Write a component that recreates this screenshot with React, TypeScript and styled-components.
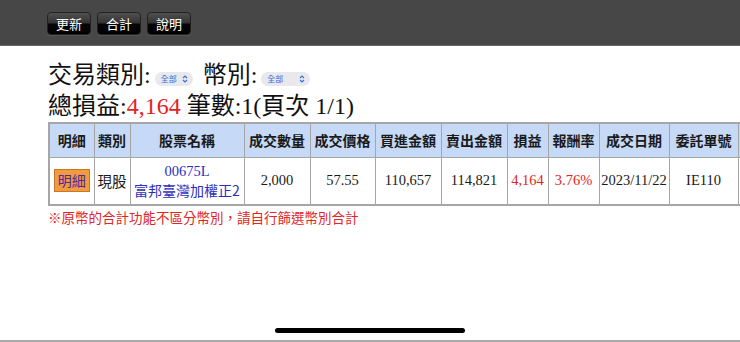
import React, { ReactElement } from 'react';
import styled, { createGlobalStyle } from 'styled-components';

const GlobalStyle = createGlobalStyle`
  html, body {
    margin: 0;
    padding: 0;
    background: #fff;
    overflow: hidden;
  }
  body {
    font-family: 'Liberation Serif', 'Noto Sans CJK TC', serif;
    color: #111;
  }
`;

const Page = styled.div`
  width: 740px;
  height: 342px;
  position: relative;
  overflow: hidden;
  border-bottom: 2px solid #a8a8a8;
  box-sizing: border-box;
`;

const TopBar = styled.div`
  height: 46px;
  background: #474747;
  border-bottom: 1px solid #6a6a6a;
  box-sizing: border-box;
  display: flex;
  align-items: flex-start;
  gap: 6px;
  padding: 12px 0 0 47px;
`;

const BarButton = styled.button`
  width: 44px;
  height: 23px;
  padding: 0;
  border: 1px solid #222;
  border-radius: 4px;
  background: linear-gradient(#505050 0%, #333 48%, #060606 52%, #000 100%);
  color: #fff;
  font-family: 'Noto Sans CJK TC', sans-serif;
  font-size: 13px;
  line-height: 21px;
  box-shadow: 0 1px 0 rgba(255, 255, 255, 0.08);
`;

const Content = styled.div`
  width: 900px;
  padding: 14px 0 0 48px;
`;

const Line = styled.div`
  font-size: 24px;
  line-height: 31px;
  display: flex;
  align-items: center;
  white-space: nowrap;
`;

const Gap = styled.span`
  display: inline-block;
  width: 10px;
`;

const Red = styled.span`
  color: #e22424;
`;

const Select = styled.span<{ $width: number }>`
  display: inline-flex;
  align-items: center;
  justify-content: space-between;
  width: ${({ $width }) => $width}px;
  height: 14px;
  margin: 6px 0 0 4px;
  padding: 0 5px 0 6px;
  box-sizing: border-box;
  border-radius: 7px;
  background: #e8e8ed;
  color: #2f6fe0;
  font-family: 'Noto Sans CJK TC', sans-serif;
  font-size: 8px;
  line-height: 14px;
`;

const Table = styled.table`
  border-collapse: collapse;
  table-layout: fixed;
  border: 2px solid #a6a6a6;
  white-space: nowrap;
`;

const Th = styled.th<{ $w: number }>`
  width: ${({ $w }) => $w}px;
  min-width: ${({ $w }) => $w}px;
  max-width: ${({ $w }) => $w}px;
  box-sizing: border-box;
  height: 34px;
  padding: 0;
  background: #c6d9f6;
  border: 1px solid #a6a6a6;
  font-family: 'Noto Sans CJK TC', sans-serif;
  font-size: 14px;
  font-weight: 700;
  color: #1a1a1a;
  text-align: center;
  overflow: hidden;
`;

const Td = styled.td<{ $red?: boolean; $sans?: boolean }>`
  height: 46px;
  padding: 0;
  border: 1px solid #a6a6a6;
  text-align: center;
  font-family: ${({ $sans }) =>
    $sans ? "'Noto Sans CJK TC', sans-serif" : "'Liberation Serif', 'Noto Sans CJK TC', serif"};
  font-size: 14.5px;
  color: ${({ $red }) => ($red ? '#e22424' : '#1a1a1a')};
`;

const DetailBadge = styled.span`
  display: inline-block;
  padding: 0 3px;
  background: #f29a3e;
  border: 1px solid #c9772a;
  color: #4a2aa0;
  font-family: 'Noto Sans CJK TC', sans-serif;
  font-size: 14px;
  line-height: 21px;
`;

const StockName = styled.div`
  color: #2b2fbf;
  line-height: 19px;
`;

const StockCode = styled.div`
  font-family: 'Liberation Serif', serif;
  font-size: 14.5px;
`;

const StockTitle = styled.div`
  font-family: 'Noto Sans CJK TC', sans-serif;
  font-size: 14px;
`;

const Note = styled.div`
  margin-top: 2px;
  color: #e22424;
  font-family: 'Noto Sans CJK TC', sans-serif;
  font-size: 13.5px;
  line-height: 18px;
`;

const HomeIndicator = styled.div`
  position: absolute;
  left: 275px;
  bottom: 7px;
  width: 190px;
  height: 5px;
  border-radius: 3px;
  background: #000;
`;

const Chevron = (): ReactElement => (
  <svg width="6" height="8" viewBox="0 0 6 8" fill="none" stroke="#2f6fe0" strokeWidth="1.1">
    <path d="M1 3 L3 1 L5 3" />
    <path d="M1 5 L3 7 L5 5" />
  </svg>
);

// the last column runs past the right edge of the window, as in the screenshot
const columns: [string, number][] = [
  ['明細', 45],
  ['類別', 36],
  ['股票名稱', 114],
  ['成交數量', 66],
  ['成交價格', 65],
  ['買進金額', 66],
  ['賣出金額', 66],
  ['損益', 41],
  ['報酬率', 51],
  ['成交日期', 70],
  ['委託單號', 69],
  ['', 60],
];

const App = (): ReactElement => (
  <Page>
    <GlobalStyle />
    <TopBar>
      <BarButton>更新</BarButton>
      <BarButton>合計</BarButton>
      <BarButton>說明</BarButton>
    </TopBar>
    <Content>
      <Line>
        交易類別:
        <Select $width={38}>
          全部 <Chevron />
        </Select>
        <Gap />
        幣別:
        <Select $width={49}>
          全部 <Chevron />
        </Select>
      </Line>
      <Line>
        總損益:<Red>4,164</Red>&nbsp;筆數:1(頁次 1/1)
      </Line>
      <Table>
        <thead>
          <tr>
            {columns.map(([label, w], i) => (
              <Th key={i} $w={w}>
                {label}
              </Th>
            ))}
          </tr>
        </thead>
        <tbody>
          <tr>
            <Td>
              <DetailBadge>明細</DetailBadge>
            </Td>
            <Td $sans>現股</Td>
            <Td>
              <StockName>
                <StockCode>00675L</StockCode>
                <StockTitle>富邦臺灣加權正2</StockTitle>
              </StockName>
            </Td>
            <Td>2,000</Td>
            <Td>57.55</Td>
            <Td>110,657</Td>
            <Td>114,821</Td>
            <Td $red>4,164</Td>
            <Td $red>3.76%</Td>
            <Td>2023/11/22</Td>
            <Td>IE110</Td>
            <Td />
          </tr>
        </tbody>
      </Table>
      <Note>※原幣的合計功能不區分幣別，請自行篩選幣別合計</Note>
    </Content>
    <HomeIndicator />
  </Page>
);

export default App;
